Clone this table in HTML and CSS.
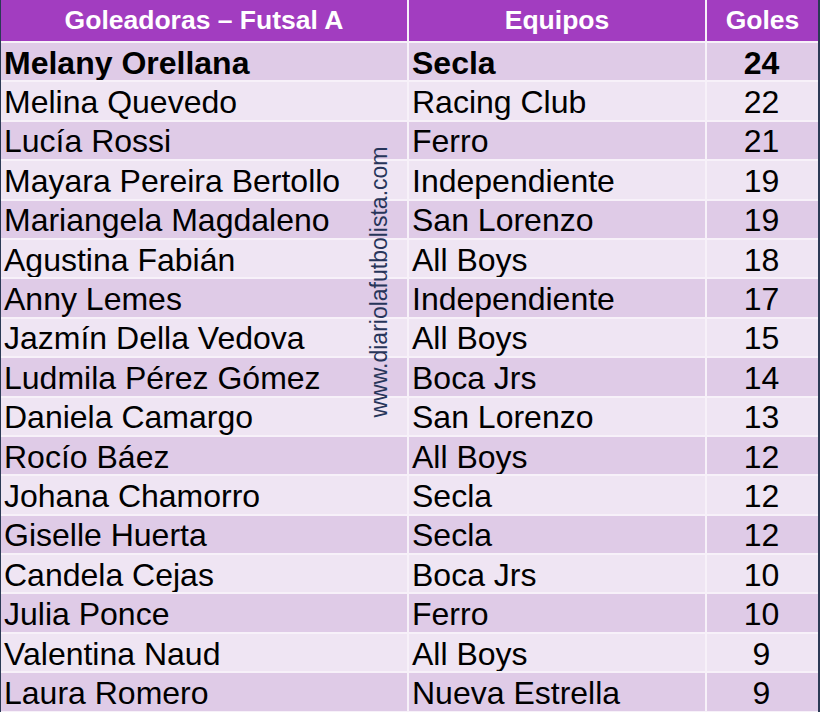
FILE: index.html
```html
<!DOCTYPE html>
<html lang="es">
<head>
<meta charset="utf-8">
<title>Goleadoras – Futsal A</title>
<link rel="stylesheet" href="styles.css">
</head>
<body>
<div class="frame">
  <div class="table">
    <div class="cell head">Goleadoras – Futsal A</div>
    <div class="cell head">Equipos</div>
    <div class="cell head">Goles</div>

    <div class="cell dark bold">Melany Orellana</div><div class="cell dark bold">Secla</div><div class="cell dark bold num">24</div>
    <div class="cell light">Melina Quevedo</div><div class="cell light">Racing Club</div><div class="cell light num">22</div>
    <div class="cell dark">Lucía Rossi</div><div class="cell dark">Ferro</div><div class="cell dark num">21</div>
    <div class="cell light">Mayara Pereira Bertollo</div><div class="cell light">Independiente</div><div class="cell light num">19</div>
    <div class="cell dark">Mariangela Magdaleno</div><div class="cell dark">San Lorenzo</div><div class="cell dark num">19</div>
    <div class="cell light">Agustina Fabián</div><div class="cell light">All Boys</div><div class="cell light num">18</div>
    <div class="cell dark">Anny Lemes</div><div class="cell dark">Independiente</div><div class="cell dark num">17</div>
    <div class="cell light">Jazmín Della Vedova</div><div class="cell light">All Boys</div><div class="cell light num">15</div>
    <div class="cell dark">Ludmila Pérez Gómez</div><div class="cell dark">Boca Jrs</div><div class="cell dark num">14</div>
    <div class="cell light">Daniela Camargo</div><div class="cell light">San Lorenzo</div><div class="cell light num">13</div>
    <div class="cell dark">Rocío Báez</div><div class="cell dark">All Boys</div><div class="cell dark num">12</div>
    <div class="cell light">Johana Chamorro</div><div class="cell light">Secla</div><div class="cell light num">12</div>
    <div class="cell dark">Giselle Huerta</div><div class="cell dark">Secla</div><div class="cell dark num">12</div>
    <div class="cell light">Candela Cejas</div><div class="cell light">Boca Jrs</div><div class="cell light num">10</div>
    <div class="cell dark">Julia Ponce</div><div class="cell dark">Ferro</div><div class="cell dark num">10</div>
    <div class="cell light">Valentina Naud</div><div class="cell light">All Boys</div><div class="cell light num">9</div>
    <div class="cell dark">Laura Romero</div><div class="cell dark">Nueva Estrella</div><div class="cell dark num">9</div>
  </div>
  <div class="watermark">www.diariolafutbolista.com</div>
</div>
</body>
</html>
```

FILE: styles.css
```css
html, body {
  margin: 0;
  padding: 0;
  background: #f7f1f9;
}
.frame {
  position: relative;
  width: 820px;
  height: 712px;
  box-sizing: border-box;
  border-left: 1px solid #2b3a55;
  border-right: 2px solid #2b3a55;
  background: #f7f1f9;
  overflow: hidden;
}
.table {
  display: grid;
  grid-template-columns: 406px 296px 1fr;
  grid-template-rows: 41px repeat(17, 37.4px);
  gap: 2px;
  font-family: "Liberation Sans", Arial, sans-serif;
}
.cell {
  display: flex;
  align-items: center;
  padding: 2px 0 0 3px;
  font-size: 32px;
  line-height: 1;
  color: #000;
  white-space: nowrap;
  overflow: hidden;
}
.head {
  background: #a23dc0;
  color: #ffffff;
  font-weight: bold;
  font-size: 26.5px;
  justify-content: center;
  padding: 0;
}
.dark { background: #dfcbe7; }
.light { background: #efe5f3; }
.bold { font-weight: bold; }
.num { justify-content: center; padding: 2px 2px 0 0; }
.watermark {
  position: absolute;
  left: 378px;
  top: 282px;
  transform: translate(-50%, -50%) rotate(-90deg);
  font-family: "Liberation Sans", Arial, sans-serif;
  font-size: 23px;
  color: #27355a;
  white-space: nowrap;
}
```
